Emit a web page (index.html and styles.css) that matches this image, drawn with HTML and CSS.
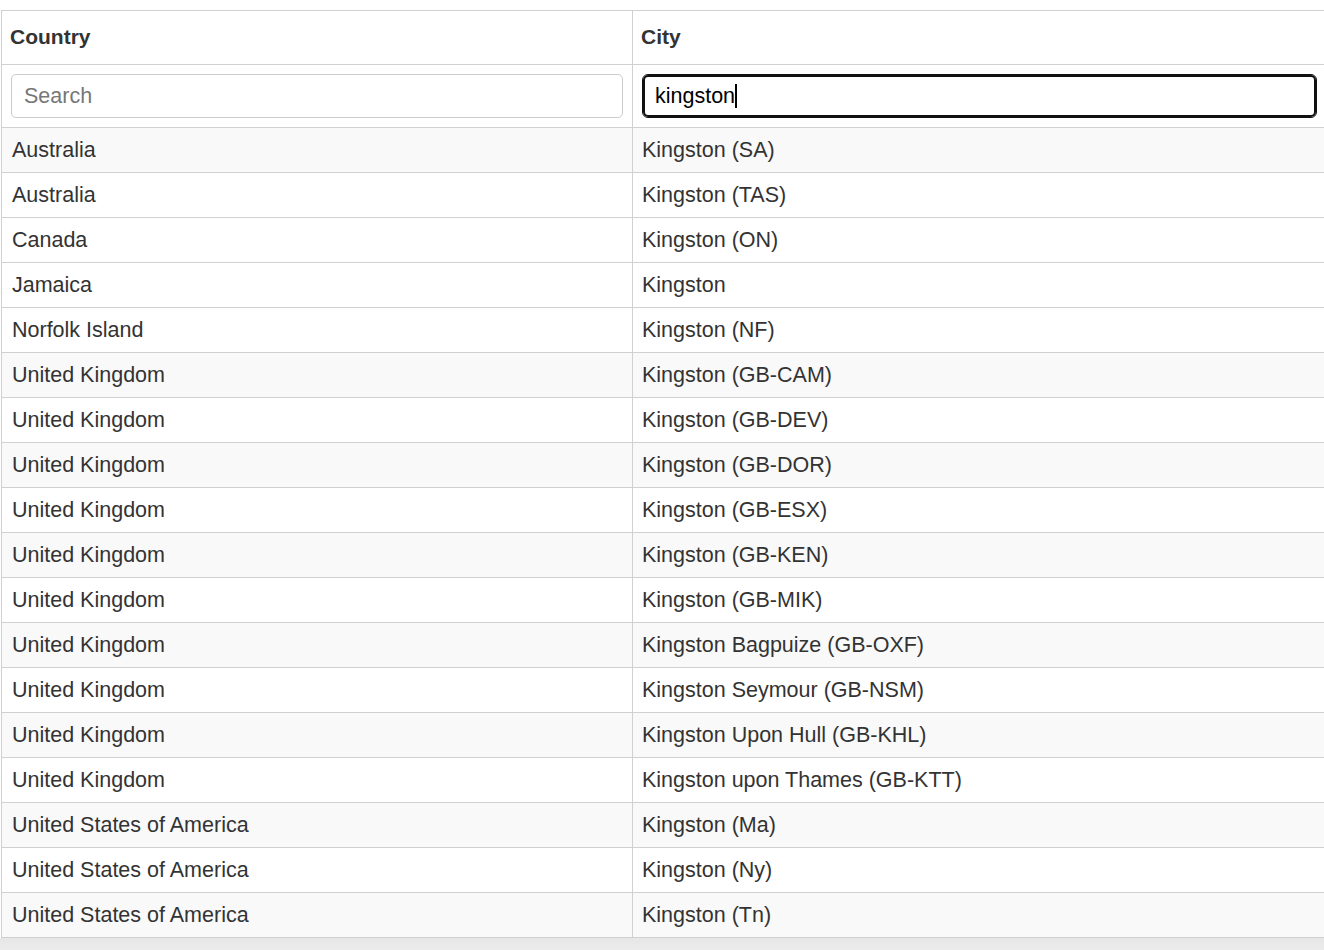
FILE: index.html
```html
<!DOCTYPE html>
<html>
<head>
<meta charset="utf-8">
<link rel="stylesheet" href="styles.css">
</head>
<body>
<div class="page">
<table class="grid">
  <colgroup><col class="col-country"><col class="col-city"></colgroup>
  <thead>
    <tr class="head-row"><th>Country</th><th>City</th></tr>
    <tr class="filter-row">
      <td><div class="search"><span class="placeholder">Search</span></div></td>
      <td><div class="search focused"><span class="value">kingston</span><span class="caret"></span></div></td>
    </tr>
  </thead>
  <tbody>
    <tr class="shade"><td>Australia</td><td>Kingston (SA)</td></tr>
    <tr><td>Australia</td><td>Kingston (TAS)</td></tr>
    <tr><td>Canada</td><td>Kingston (ON)</td></tr>
    <tr><td>Jamaica</td><td>Kingston</td></tr>
    <tr><td>Norfolk Island</td><td>Kingston (NF)</td></tr>
    <tr class="shade"><td>United Kingdom</td><td>Kingston (GB-CAM)</td></tr>
    <tr><td>United Kingdom</td><td>Kingston (GB-DEV)</td></tr>
    <tr class="shade"><td>United Kingdom</td><td>Kingston (GB-DOR)</td></tr>
    <tr><td>United Kingdom</td><td>Kingston (GB-ESX)</td></tr>
    <tr class="shade"><td>United Kingdom</td><td>Kingston (GB-KEN)</td></tr>
    <tr><td>United Kingdom</td><td>Kingston (GB-MIK)</td></tr>
    <tr class="shade"><td>United Kingdom</td><td>Kingston Bagpuize (GB-OXF)</td></tr>
    <tr><td>United Kingdom</td><td>Kingston Seymour (GB-NSM)</td></tr>
    <tr class="shade"><td>United Kingdom</td><td>Kingston Upon Hull (GB-KHL)</td></tr>
    <tr><td>United Kingdom</td><td>Kingston upon Thames (GB-KTT)</td></tr>
    <tr class="shade"><td>United States of America</td><td>Kingston (Ma)</td></tr>
    <tr><td>United States of America</td><td>Kingston (Ny)</td></tr>
    <tr class="shade"><td>United States of America</td><td>Kingston (Tn)</td></tr>
  </tbody>
</table>
<div class="scrollbar"></div>
</div>
</body>
</html>
```

FILE: styles.css
```css
html, body {
  margin: 0;
  padding: 0;
  background: #fff;
  overflow: hidden;
}
body {
  font-family: "Liberation Sans", Arial, sans-serif;
  color: #333;
}
.page {
  padding-top: 10px;
  width: 1324px;
  height: 950px;
  overflow: hidden;
  display: flex;
  flex-direction: column;
}
.grid {
  border-collapse: collapse;
  table-layout: fixed;
  width: 1326px;
  margin-left: 1px;
  border: 1px solid #d0d0d0;
  font-size: 21.5px;
  flex: none;
}
.col-country { width: 631px; }
.grid th, .grid td {
  border: 1px solid #d0d0d0;
  text-align: left;
  line-height: 24px;
  white-space: nowrap;
}
.grid th {
  font-weight: bold;
  font-size: 21px;
  padding: 14px 8px 15px 8px;
  color: #333;
}
.grid tbody td {
  padding: 10px 9px 10px 10px;
}
.grid tbody td + td {
  padding-left: 9px;
}
.shade td {
  background: #f9f9f9;
}
.filter-row td {
  padding: 9px 9px 9px 9px;
}
.search {
  box-sizing: border-box;
  height: 44px;
  border: 1px solid #cccccc;
  border-radius: 5px;
  padding: 0 12px;
  display: flex;
  align-items: center;
  background: #fff;
}
.placeholder {
  color: #777;
  font-size: 21.5px;
}
.focused {
  border: 1px solid #111;
  box-shadow: inset 0 0 0 2px #111;
  border-radius: 6px;
}
.value {
  color: #000;
  font-size: 21.5px;
}
.caret {
  display: inline-block;
  width: 2px;
  height: 24px;
  background: #000;
}
.scrollbar {
  flex: 1;
  background: linear-gradient(#e6e6e6, #f0f0f0);
}
```
